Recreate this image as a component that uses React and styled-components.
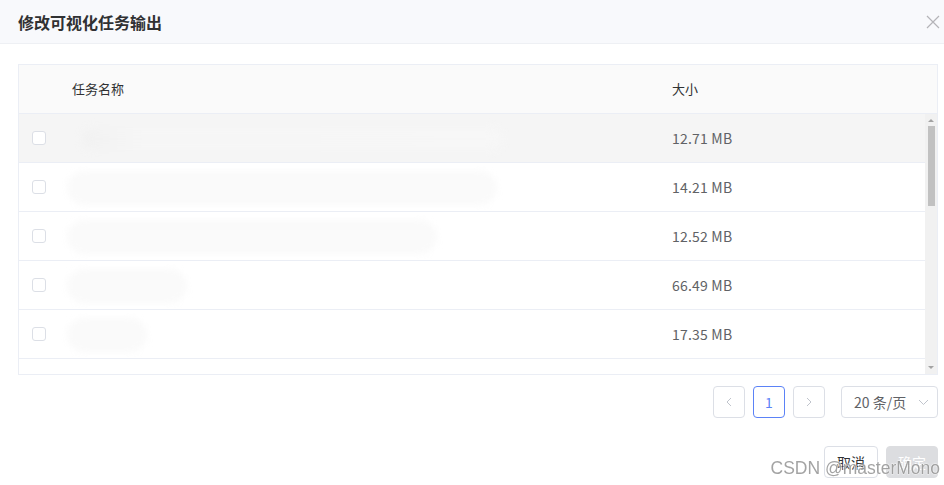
import styled, { createGlobalStyle } from "styled-components";

const rows = [
  { size: "12.71 MB", blur: 0, hover: true },
  { size: "14.21 MB", blur: 430 },
  { size: "12.52 MB", blur: 370 },
  { size: "66.49 MB", blur: 120 },
  { size: "17.35 MB", blur: 80 },
  { size: "", blur: 0 },
];

export default function App() {
  return (
    <Dialog>
      <Header>
        <Title>修改可视化任务输出</Title>
        <CloseButton aria-label="close">
          <svg width="14" height="14" viewBox="0 0 14 14">
            <path d="M1 1L13 13M13 1L1 13" stroke="#b4b4b8" strokeWidth="1.2" />
          </svg>
        </CloseButton>
      </Header>

      <Body>
        <Table>
          <HeadRow>
            <Cell />
            <HeadCell>任务名称</HeadCell>
            <HeadCell>大小</HeadCell>
          </HeadRow>
          <BodyWrap>
            <Rows>
              {rows.map((row, i) => (
                <Row key={i} $hover={row.hover}>
                  <Cell>{row.size && <Checkbox />}</Cell>
                  <Cell>
                    {row.blur > 0 && <Blur style={{ width: row.blur }} />}
                    {row.hover && <Streak />}
                  </Cell>
                  <SizeCell>{row.size}</SizeCell>
                </Row>
              ))}
            </Rows>
            <ScrollTrack>
              <Arrow />
              <Thumb />
              <Spacer />
              <Arrow $down />
            </ScrollTrack>
          </BodyWrap>
        </Table>

        <Pager>
          <PageButton>
            <svg width="8" height="10" viewBox="0 0 8 10">
              <path d="M6 1L2 5L6 9" fill="none" stroke="#c0c4cc" strokeWidth="1" />
            </svg>
          </PageButton>
          <PageButton $active>1</PageButton>
          <PageButton>
            <svg width="8" height="10" viewBox="0 0 8 10">
              <path d="M2 1L6 5L2 9" fill="none" stroke="#c0c4cc" strokeWidth="1" />
            </svg>
          </PageButton>
          <SizeSelect>
            20 条/页
            <svg width="11" height="7" viewBox="0 0 11 7">
              <path d="M1 1L5.5 5.5L10 1" fill="none" stroke="#c0c4cc" strokeWidth="1" />
            </svg>
          </SizeSelect>
        </Pager>

        <Footer>
          <FooterButton>取消</FooterButton>
          <FooterButton $primary>确定</FooterButton>
        </Footer>
      </Body>

      <Watermark>CSDN @masterMono</Watermark>
    </Dialog>
  );
}

const GlobalStyle = createGlobalStyle`
  html, body {
    margin: 0;
    padding: 0;
    background: #fff;
    overflow: hidden;
  }
  body {
    font-family: "Noto Sans CJK SC", "Noto Sans", sans-serif;
  }
`;

function Dialog({ children }) {
  return (
    <>
      <GlobalStyle />
      <DialogBox>{children}</DialogBox>
    </>
  );
}

const DialogBox = styled.div`
  position: relative;
  width: 944px;
  height: 485px;
  overflow: hidden;
  background: #fff;
`;

const Header = styled.div`
  display: flex;
  align-items: center;
  justify-content: space-between;
  height: 43px;
  padding: 0 4px 0 18px;
  background: #f8f9fc;
  border-bottom: 1px solid #eef0f4;
`;

const Title = styled.h1`
  margin: 0;
  font-size: 16px;
  font-weight: 700;
  color: #303133;
`;

const CloseButton = styled.span`
  display: flex;
  align-items: center;
  justify-content: center;
  width: 14px;
  height: 14px;
`;

const Body = styled.div`
  padding: 20px 6px 0 18px;
`;

const Table = styled.div`
  box-sizing: border-box;
  height: 311px;
  border: 1px solid #ebeef5;
  overflow: hidden;
`;

const grid = `
  display: grid;
  grid-template-columns: 53px 600px 1fr;
  align-items: center;
`;

const HeadRow = styled.div`
  ${grid}
  height: 48px;
  background: #fafafa;
  border-bottom: 1px solid #ebeef5;
`;

const Cell = styled.div`
  position: relative;
  display: flex;
  align-items: center;
  height: 100%;
  padding-left: 13px;
  box-sizing: border-box;
`;

const HeadCell = styled.div`
  font-size: 13px;
  color: #303133;
  margin-top: -1px;
`;

const BodyWrap = styled.div`
  display: flex;
  height: 260px;
`;

const Rows = styled.div`
  flex: 1;
  overflow: hidden;
`;

const Row = styled.div`
  ${grid}
  height: 48px;
  border-bottom: 1px solid #ebeef5;
  background: ${(p) => (p.$hover ? "#f5f5f5" : "#fff")};
`;

const SizeCell = styled.div`
  font-size: 14px;
  color: #606266;
  letter-spacing: 0.2px;
`;

const Checkbox = styled.span`
  display: block;
  width: 14px;
  height: 14px;
  box-sizing: border-box;
  border: 1px solid #dcdfe6;
  border-radius: 3px;
  background: #fff;
`;

const Blur = styled.div`
  position: absolute;
  left: -5px;
  top: 8px;
  height: 34px;
  border-radius: 17px;
  background: #fafafa;
  filter: blur(3px);
`;

const Streak = styled.div`
  position: absolute;
  left: 10px;
  top: 14px;
  width: 420px;
  height: 22px;
  border-radius: 11px;
  background: linear-gradient(90deg, #efefef 0%, #f7f7f7 15%, #f8f8f8 100%);
  filter: blur(4px);
  opacity: 0.6;
`;

const ScrollTrack = styled.div`
  display: flex;
  flex-direction: column;
  align-items: center;
  width: 12px;
  background: #f1f1f1;
`;

const Arrow = styled.span`
  width: 0;
  height: 0;
  margin: ${(p) => (p.$down ? "0 0 5px" : "5px 0 0")};
  border-left: 3px solid transparent;
  border-right: 3px solid transparent;
  ${(p) =>
    p.$down
      ? "border-top: 3px solid #a3a3a3;"
      : "border-bottom: 3px solid #a3a3a3;"}
`;

const Thumb = styled.div`
  width: 7px;
  height: 80px;
  margin-top: 4px;
  background: #c1c1c1;
`;

const Spacer = styled.div`
  flex: 1;
`;

const Pager = styled.div`
  display: flex;
  justify-content: flex-end;
  align-items: center;
  gap: 8px;
  margin-top: 11px;
`;

const PageButton = styled.span`
  display: flex;
  align-items: center;
  justify-content: center;
  width: 32px;
  height: 32px;
  box-sizing: border-box;
  border: 1px solid ${(p) => (p.$active ? "#5b82f7" : "#dcdfe6")};
  border-radius: 4px;
  font-size: 14px;
  color: #5b82f7;
`;

const SizeSelect = styled.span`
  display: flex;
  align-items: center;
  justify-content: space-between;
  width: 97px;
  height: 32px;
  margin-left: 8px;
  padding: 0 8px 0 12px;
  box-sizing: border-box;
  border: 1px solid #dcdfe6;
  border-radius: 4px;
  font-size: 14px;
  color: #606266;
`;

const Footer = styled.div`
  display: flex;
  justify-content: flex-end;
  gap: 8px;
  margin-top: 28px;
`;

const FooterButton = styled.span`
  display: flex;
  align-items: center;
  justify-content: center;
  height: 32px;
  padding: 0 ${(p) => (p.$primary ? "11px" : "12px")};
  box-sizing: border-box;
  border: 1px solid ${(p) => (p.$primary ? "#dcdde0" : "#dcdfe6")};
  border-radius: 4px;
  background: ${(p) => (p.$primary ? "#dcdde0" : "#fff")};
  font-size: 14px;
  color: ${(p) => (p.$primary ? "#fff" : "#303133")};
`;

const Watermark = styled.span`
  position: absolute;
  right: 4px;
  bottom: 6px;
  font-family: "Liberation Sans", Arial, sans-serif;
  font-size: 17.5px;
  color: #9a9a9a;
  -webkit-text-stroke: 0.5px #fff;
  paint-order: stroke;
  text-shadow: 0 0 2px #fff;
  opacity: 0.9;
`;
